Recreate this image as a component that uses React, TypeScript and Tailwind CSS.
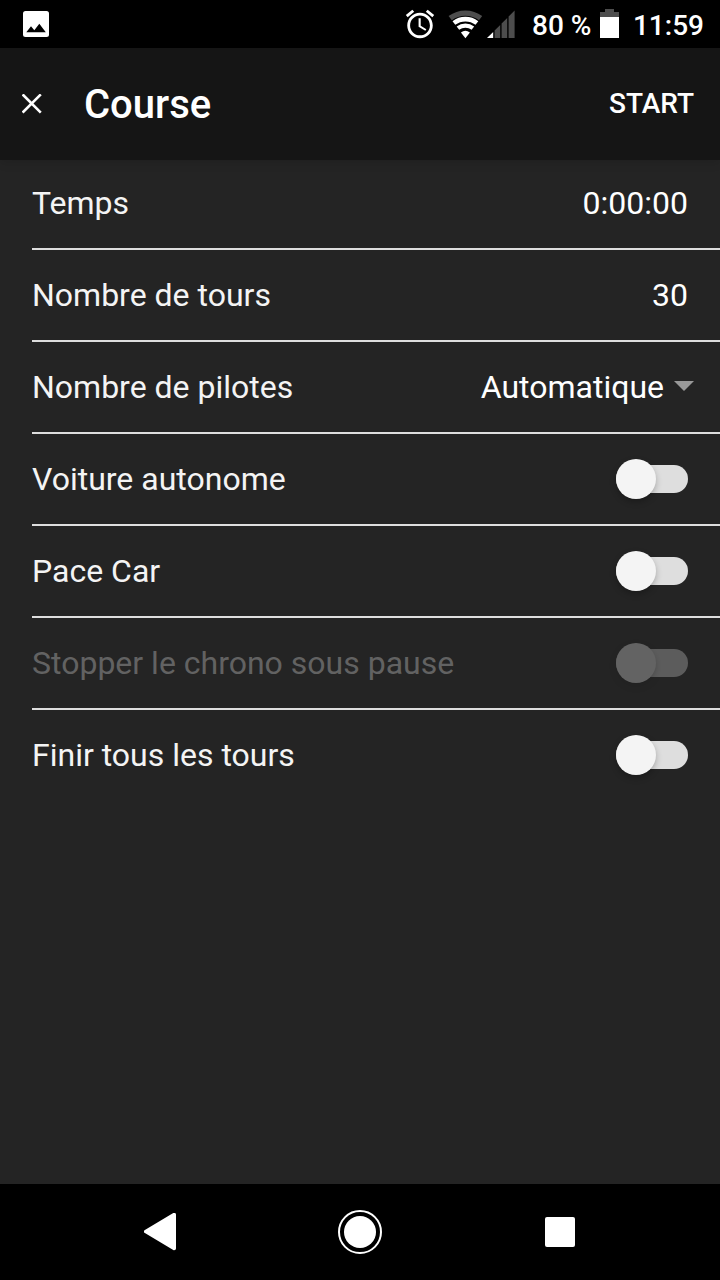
import React, { useState } from "react";

type Row = {
  label: string;
  value?: string;
  select?: boolean;
  disabled?: boolean;
};

const rows: Row[] = [
  { label: "Temps", value: "0:00:00" },
  { label: "Nombre de tours", value: "30" },
  { label: "Nombre de pilotes", value: "Automatique", select: true },
  { label: "Voiture autonome" },
  { label: "Pace Car" },
  { label: "Stopper le chrono sous pause", disabled: true },
  { label: "Finir tous les tours" },
];

const StatusBar = () => (
  <div className="flex h-12 items-center bg-black text-white">
    <svg className="ml-[23px] h-[26px] w-[26px]" viewBox="0 0 26 26">
      <rect width="26" height="26" rx="2.5" fill="#fff" />
      <path d="M3.3 21.3 8 15.3l3.3 4 5-6.6 6.5 8.6z" fill="#000" />
    </svg>
    <svg className="ml-[354px] h-[34px] w-[34px]" viewBox="0 0 24 24" fill="#fff">
      <path d="M22 5.72l-4.6-3.86-1.29 1.53 4.6 3.86L22 5.72zM7.88 3.39L6.6 1.86 2 5.71l1.29 1.53 4.59-3.85zM12.5 8H11v6l4.75 2.85.75-1.23-4-2.37V8zM12 4c-4.97 0-9 4.03-9 9s4.02 9 9 9c4.97 0 9-4.03 9-9s-4.03-9-9-9zm0 16c-3.87 0-7-3.13-7-7s3.13-7 7-7 7 3.13 7 7-3.13 7-7 7z" />
    </svg>
    <svg className="ml-[11px] h-12 w-[35px]" viewBox="448 0 35 48">
      <g fill="none">
        <path d="M450.2 18.2A25.4 25.4 0 0 1 480.6 18.2" stroke="#4d4d4d" strokeWidth="5.4" />
        <path d="M453.9 23A19.2 19.2 0 0 1 476.9 23" stroke="#fff" strokeWidth="4.6" />
        <path d="M457.9 28.2A12.4 12.4 0 0 1 472.9 28.2" stroke="#fff" strokeWidth="4.2" />
      </g>
      <path d="M465.4 38.3 460.9 32.4A7.5 7.5 0 0 1 469.9 32.4z" fill="#fff" />
    </svg>
    <svg className="ml-1 h-12 w-7" viewBox="487 0 28 48">
      <path d="M487 38 493.2 32V38z" fill="#fff" />
      <path
        d="M494.6 38V30.6L500.2 25V38zM501.6 38V23.6L507.2 18V38zM508.6 38V16.6L514.6 10.6V38z"
        fill="#4d4d4d"
      />
    </svg>
    <span className="ml-[17px] mt-1 w-[60px] whitespace-nowrap text-[28px] leading-none font-medium">
      80 %
    </span>
    <svg className="ml-2 h-12 w-[19px]" viewBox="600 0 19 48">
      <path d="M605 9H614V12H619V17H600V12H605z" fill="#4d4d4d" />
      <path d="M600 17H619V38H600z" fill="#fff" />
    </svg>
    <span className="mr-4 ml-auto mt-1 text-[28px] leading-none font-medium">11:59</span>
  </div>
);

const Header = () => (
  <header className="relative z-10 flex h-28 items-center bg-[#151515] text-white shadow-[0_2px_10px_rgba(0,0,0,0.14)]">
    <button className="ml-[22px]">
      <svg className="h-5 w-5" viewBox="0 0 20 20" stroke="#fff" strokeWidth="2.6">
        <path d="M.6.4 18.8 18.6M18.8.4.6 18.6" />
      </svg>
    </button>
    <h1 className="mt-0.5 ml-[42px] text-[40px] leading-none font-medium">Course</h1>
    <button className="mr-[26px] ml-auto text-[28px] leading-none font-medium">START</button>
  </header>
);

const Toggle = ({ disabled }: { disabled?: boolean }) => {
  const [on, setOn] = useState(false);

  return (
    <button
      role="switch"
      aria-checked={on}
      disabled={disabled}
      onClick={() => setOn(!on)}
      className={`mr-8 flex h-10 w-[72px] items-center ${disabled ? "opacity-30" : ""}`}
    >
      <span className="flex h-7 w-full items-center rounded-full bg-[#dedede]">
        <span
          className={`h-10 w-10 rounded-full bg-[#f4f4f4] shadow-[0_3px_6px_rgba(0,0,0,0.25)] ${
            on ? "ml-8" : ""
          }`}
        />
      </span>
    </button>
  );
};

const App = () => {
  return (
    <div className="flex h-[1280px] w-[720px] flex-col overflow-hidden bg-[#242424] font-['Roboto',sans-serif]">
      <StatusBar />
      <Header />
      <main className="-mt-0.5 flex-1 pl-8">
        {rows.map((row) => (
          <div
            key={row.label}
            className="flex h-[92px] items-center justify-between border-b-2 border-[#dedede] text-[32px] leading-none last:border-transparent"
          >
            <span className={row.disabled ? "text-[#626262]" : "text-[#f4f4f4]"}>{row.label}</span>
            {row.value ? (
              <span className={`flex items-center text-white ${row.select ? "mr-[26px]" : "mr-8"}`}>
                {row.value}
                {row.select && (
                  <svg className="mb-0.5 ml-2.5 h-2.5 w-5" viewBox="0 0 20 10">
                    <path d="M0 0H20L10 10z" fill="#999" />
                  </svg>
                )}
              </span>
            ) : (
              <Toggle disabled={row.disabled} />
            )}
          </div>
        ))}
      </main>
      <nav className="flex h-24 items-center bg-black">
        <svg className="ml-36 h-[38px] w-8" viewBox="0 0 32 38">
          <path
            d="M1.8 18.5 30.2 1.6V35.4z"
            fill="#fff"
            stroke="#fff"
            strokeWidth="3.6"
            strokeLinejoin="round"
          />
        </svg>
        <svg className="ml-[162px] h-11 w-11" viewBox="0 0 44 44">
          <circle cx="22" cy="22" r="21" fill="none" stroke="#fff" strokeWidth="2" />
          <circle cx="22" cy="22" r="16" fill="#fff" />
        </svg>
        <div className="ml-[163px] h-[30px] w-[30px] rounded-xs bg-white" />
      </nav>
    </div>
  );
};

export default App;
